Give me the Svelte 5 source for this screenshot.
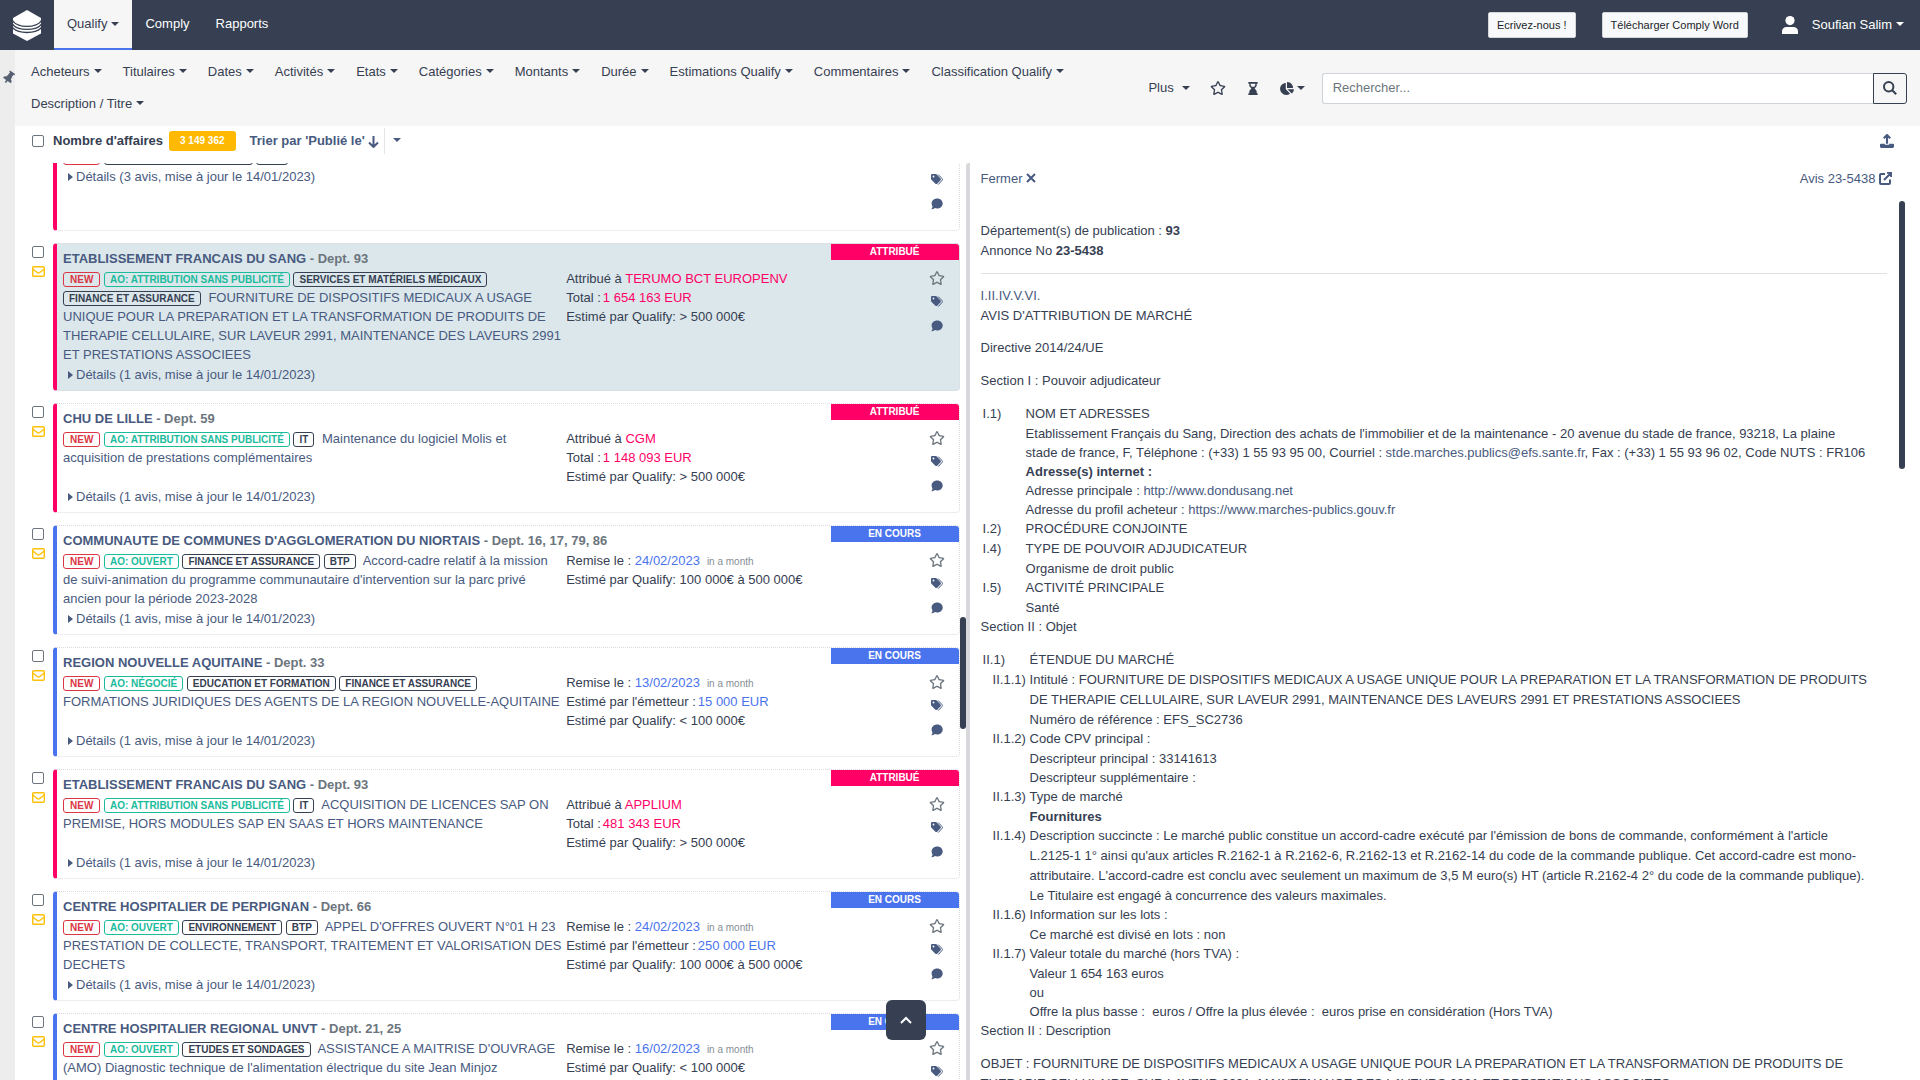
<script>
  const filters = ['Acheteurs', 'Titulaires', 'Dates', 'Activités', 'Etats', 'Catégories', 'Montants', 'Durée', 'Estimations Qualify', 'Commentaires', 'Classification Qualify', 'Description / Titre'];

  const items = [
    { id: 0, buyer: 'COMMUNE DE BREST', dept: 'Dept. 29', won: true, tags: ['NEW', 'EDUCATION ET FORMATION', 'BTP'], title: '', count: 3, info: [] },
    { id: 1, buyer: 'ETABLISSEMENT FRANCAIS DU SANG', dept: 'Dept. 93', won: true, selected: true, tags: ['NEW', 'AO: ATTRIBUTION SANS PUBLICITÉ', 'SERVICES ET MATÉRIELS MÉDICAUX', 'FINANCE ET ASSURANCE'], title: 'FOURNITURE DE DISPOSITIFS MEDICAUX A USAGE UNIQUE POUR LA PREPARATION ET LA TRANSFORMATION DE PRODUITS DE THERAPIE CELLULAIRE, SUR LAVEUR 2991, MAINTENANCE DES LAVEURS 2991 ET PRESTATIONS ASSOCIEES', count: 1, info: [['Attribué à ', 'TERUMO BCT EUROPENV'], ['Total :', '1 654 163 EUR'], ['Estimé par Qualify: > 500 000€']] },
    { id: 2, buyer: 'CHU DE LILLE', dept: 'Dept. 59', won: true, tags: ['NEW', 'AO: ATTRIBUTION SANS PUBLICITÉ', 'IT'], title: 'Maintenance du logiciel Molis et acquisition de prestations complémentaires', count: 1, info: [['Attribué à ', 'CGM'], ['Total :', '1 148 093 EUR'], ['Estimé par Qualify: > 500 000€']] },
    { id: 3, buyer: "COMMUNAUTE DE COMMUNES D'AGGLOMERATION DU NIORTAIS", dept: 'Dept. 16, 17, 79, 86', tags: ['NEW', 'AO: OUVERT', 'FINANCE ET ASSURANCE', 'BTP'], title: "Accord-cadre relatif à la mission de suivi-animation du programme communautaire d'intervention sur la parc privé ancien pour la période 2023-2028", count: 1, info: [['Remise le : ', '24/02/2023', 'in a month'], ['Estimé par Qualify: 100 000€ à 500 000€']] },
    { id: 4, buyer: 'REGION NOUVELLE AQUITAINE', dept: 'Dept. 33', tags: ['NEW', 'AO: NÉGOCIÉ', 'EDUCATION ET FORMATION', 'FINANCE ET ASSURANCE'], title: 'FORMATIONS JURIDIQUES DES AGENTS DE LA REGION NOUVELLE-AQUITAINE', count: 1, info: [['Remise le : ', '13/02/2023', 'in a month'], ["Estimé par l'émetteur :", '15 000 EUR'], ['Estimé par Qualify: < 100 000€']] },
    { id: 5, buyer: 'ETABLISSEMENT FRANCAIS DU SANG', dept: 'Dept. 93', won: true, tags: ['NEW', 'AO: ATTRIBUTION SANS PUBLICITÉ', 'IT'], title: 'ACQUISITION DE LICENCES SAP ON PREMISE, HORS MODULES SAP EN SAAS ET HORS MAINTENANCE', count: 1, info: [['Attribué à ', 'APPLIUM'], ['Total :', '481 343 EUR'], ['Estimé par Qualify: > 500 000€']] },
    { id: 6, buyer: 'CENTRE HOSPITALIER DE PERPIGNAN', dept: 'Dept. 66', tags: ['NEW', 'AO: OUVERT', 'ENVIRONNEMENT', 'BTP'], title: "APPEL D'OFFRES OUVERT N°01 H 23 PRESTATION DE COLLECTE, TRANSPORT, TRAITEMENT ET VALORISATION DES DECHETS", count: 1, info: [['Remise le : ', '24/02/2023', 'in a month'], ["Estimé par l'émetteur :", '250 000 EUR'], ['Estimé par Qualify: 100 000€ à 500 000€']] },
    { id: 7, buyer: 'CENTRE HOSPITALIER REGIONAL UNVT', dept: 'Dept. 21, 25', tags: ['NEW', 'AO: OUVERT', 'ETUDES ET SONDAGES'], title: "ASSISTANCE A MAITRISE D'OUVRAGE (AMO) Diagnostic technique de l'alimentation électrique du site Jean Minjoz", count: 1, info: [['Remise le : ', '16/02/2023', 'in a month'], ['Estimé par Qualify: < 100 000€']] }
  ];

  function tagKind(tag) {
    if (tag === 'NEW') return 'new';
    return tag.startsWith('AO:') ? 'procedure' : 'sector';
  }

  const lots = [
    ['II.1.1)', ['Intitulé : FOURNITURE DE DISPOSITIFS MEDICAUX A USAGE UNIQUE POUR LA PREPARATION ET LA TRANSFORMATION DE PRODUITS DE THERAPIE CELLULAIRE, SUR LAVEUR 2991, MAINTENANCE DES LAVEURS 2991 ET PRESTATIONS ASSOCIEES', 'Numéro de référence : EFS_SC2736']],
    ['II.1.2)', ['Code CPV principal :', 'Descripteur principal : 33141613', 'Descripteur supplémentaire :']],
    ['II.1.3)', ['Type de marché', '*Fournitures']],
    ['II.1.4)', ["Description succincte : Le marché public constitue un accord-cadre exécuté par l'émission de bons de commande, conformément à l'article L.2125-1 1° ainsi qu'aux articles R.2162-1 à R.2162-6, R.2162-13 et R.2162-14 du code de la commande publique. Cet accord-cadre est mono-attributaire. L'accord-cadre est conclu avec seulement un maximum de 3,5 M euro(s) HT (article R.2162-4 2° du code de la commande publique).", 'Le Titulaire est engagé à concurrence des valeurs maximales.']],
    ['II.1.6)', ['Information sur les lots :', 'Ce marché est divisé en lots : non']],
    ['II.1.7)', ['Valeur totale du marché (hors TVA) :', 'Valeur 1 654 163 euros', 'ou', 'Offre la plus basse :\u00a0 euros / Offre la plus élevée :\u00a0 euros prise en considération (Hors TVA)']]
  ];
</script>

{#snippet star()}
  <svg class="icon star" viewBox="0 0 576 512" aria-hidden="true"><path d="M528.1 171.5L382 150.2 316.7 17.8c-11.7-23.6-45.6-23.9-57.4 0L194 150.2 47.9 171.5c-26.2 3.8-36.7 36.1-17.7 54.6l105.7 103-25 145.5c-4.5 26.3 23.2 46 46.4 33.7L288 439.6l130.7 68.7c23.2 12.2 50.9-7.4 46.4-33.7l-25-145.5 105.7-103c19-18.5 8.5-50.8-17.7-54.6zM388.6 312.3l23.7 138.4L288 385.4l-124.3 65.3 23.7-138.4-100.6-98 139-20.2 62.2-126 62.2 126 139 20.2-100.6 98z" /></svg>
{/snippet}

<div class="app">
  <header class="topbar">
    <a class="logo" href="#home" aria-label="Accueil">
      <svg viewBox="0 0 28 31" aria-hidden="true">
        <path fill="#fff" d="M14 0 28 8v15.500L14 31 0 23.500V8z" />
        <path fill="none" stroke="#364052" stroke-width="1.300" d="M-.5 10.500C2 14.500 7 16.300 14 16.300s12-1.800 14.500-5.800M-.5 14C2 17.800 7 19.400 14 19.400s12-1.600 14.500-5.400M-.5 17.500C2 21 7 22.500 14 22.500s12-1.500 14.500-5" />
      </svg>
    </a>
    <nav class="tabs" aria-label="Applications">
      <button class="tab active">Qualify<span class="caret"></span></button>
      <a class="tab" href="#comply">Comply</a>
      <a class="tab" href="#rapports">Rapports</a>
    </nav>
    <div class="account">
      <button class="light">Ecrivez-nous !</button>
      <button class="light">Télécharger Comply Word</button>
      <button class="user">
        <svg viewBox="0 0 16 18" aria-hidden="true"><circle cx="8" cy="4.600" r="4.600" /><path d="M0 18v-2.500C0 12.500 2 11 4.500 11h7c2.500 0 4.500 1.500 4.500 4.500V18z" /></svg>
        <span>Soufian Salim<span class="caret"></span></span>
      </button>
    </div>
  </header>

  <div class="body">
    <aside class="rail">
      <button aria-label="Épingler">
        <svg viewBox="0 0 384 512" aria-hidden="true"><path d="M298 278l-22-114V64h20a24 24 0 0 0 24-24V24a24 24 0 0 0-24-24H88a24 24 0 0 0-24 24v16a24 24 0 0 0 24 24h20v100L86 278c-48 20-86 56-86 98 0 13 11 24 24 24h136v88l32 24 32-24v-88h136c13 0 24-11 24-24 0-43-38-78-86-98z" /></svg>
      </button>
    </aside>

    <main class="workspace">
      <div class="filterbar">
        <div class="filters">
          {#each filters as name}
            <button>{name}<span class="caret"></span></button>
          {/each}
        </div>
        <div class="tools">
          <button class="plus">Plus<span class="caret"></span></button>
          <button aria-label="Favoris">{@render star()}</button>
          <button aria-label="En attente">
            <svg class="hourglass" viewBox="0 0 10 14" aria-hidden="true"><path fill-rule="evenodd" d="M0 0h10v2H9v1.500C9 5 7.600 6 6.700 7 7.600 8 9 9 9 10.500V12h1v2H0v-2h1v-1.500C1 9 2.400 8 3.300 7 2.400 6 1 5 1 3.500V2H0zM2.500 2v1.200L3.600 5h2.800l1.100-1.800V2z" /></svg>
          </button>
          <button class="chart" aria-label="Statistiques">
            <svg viewBox="0 0 544 512" aria-hidden="true"><path d="M527.800 288H290.500l158 158c6 6 15.800 6.500 21.900.7 38.700-36.500 65.600-85.600 73.100-141 1.300-9.500-6.100-17.700-15.700-17.700zM511.900 223.200C503.700 103.700 408.300 8.300 288.800.1c-9.100-.6-16.800 7.100-16.800 16.200V240h223.800c9.100 0 16.800-7.700 16.100-16.800zM224 288V50.700c0-9.600-8.200-17-17.700-15.600C86.200 52-5.300 155.900.2 280.500 5.900 408.500 114.900 513.600 243 512c50.400-.6 96.900-16.900 135.300-44 7.900-5.600 8.400-17.200 1.600-24.100L224 288z" /></svg><span class="caret"></span>
          </button>
        </div>
        <form class="search">
          <input type="search" placeholder="Rechercher..." aria-label="Rechercher" />
          <button type="button" aria-label="Lancer la recherche">
            <svg viewBox="0 0 14 14" aria-hidden="true"><circle cx="5.700" cy="5.700" r="4.700" /><path d="m9.200 9.200 4 4" /></svg>
          </button>
        </form>
      </div>

      <div class="listbar">
        <input class="check" type="checkbox" aria-label="Tout sélectionner" />
        <strong>Nombre d'affaires</strong>
        <span class="total">3 149 362</span>
        <button class="sort">Trier par 'Publié le'<svg viewBox="0 0 11 13" aria-hidden="true"><path d="M5.500 1v11M1 7.500 5.500 12 10 7.500" /></svg></button>
        <button class="sortmenu" aria-label="Options de tri"><span class="caret"></span></button>
        <button class="export" aria-label="Exporter">
          <svg viewBox="0 0 13 13" aria-hidden="true"><path class="line" d="M6.500 9V1.500M3.500 4l3-3 3 3" /><path d="M0 9.500 1 9h3.500v1h4V9H12l1 .5V12l-1 1H1l-1-1z" /></svg>
        </button>
      </div>

      <div class="panes">
        <section class="results" aria-label="Affaires">
          <div class="stack">
            {#each items as item (item.id)}
              <div class="entry">
                <div class="gutter">
                  <input class="check" type="checkbox" aria-label={item.buyer} />
                  <button aria-label="Envoyer">
                    <svg viewBox="0 0 13 11" aria-hidden="true"><rect x=".7" y=".7" width="11.600" height="9.600" rx="1" /><path d="m.8 3 4.700 3.700q1 .7 2 0L12.200 3" /></svg>
                  </button>
                </div>
                <article class="card" class:won={item.won} class:selected={item.selected}>
                  <span class="status">{item.won ? 'ATTRIBUÉ' : 'EN COURS'}</span>
                  <div class="content">
                    <h2>{item.buyer} <span>- {item.dept}</span></h2>
                    <div class="cols">
                      <a class="desc" href="#affaire">
                        {#each item.tags as tag, i}<span class="tag {tagKind(tag)}" class:last={i === item.tags.length - 1}>{tag}</span>{' '}{/each}
                        <span>{item.title}</span>
                      </a>
                      <div class="info">
                        {#each item.info as [label, value, hint]}
                          <div>{label}{#if value}<b class:amount={label.endsWith(':')}>{value}</b>{/if}{#if hint}<small>{hint}</small>{/if}</div>
                        {/each}
                      </div>
                    </div>
                    <button class="details"><i></i>Détails ({item.count} avis, mise à jour le 14/01/2023)</button>
                  </div>
                  <div class="actions">
                    <button aria-label="Favori">{@render star()}</button>
                    <button aria-label="Étiquettes">
                      <svg class="small" viewBox="0 0 12 12" aria-hidden="true"><path fill-rule="evenodd" d="M0 1.200C0 .5.500 0 1.200 0h3.600q.6 0 1 .4l3.800 4q.8.900 0 1.800L6.200 9.700q-.9.800-1.800 0L.4 5.800Q0 5.400 0 4.800zM2.500 1.600a.9.9 0 1 0 0 1.800.9.900 0 0 0 0-1.800z" /><path class="line" d="m7.200.6 3.700 3.800q1 1.100 0 2.200L7.200 10.600" /></svg>
                    </button>
                    <button aria-label="Commentaires">
                      <svg class="small" viewBox="0 0 12 12" aria-hidden="true"><path d="M6.200.5C9.400.5 11.700 2.700 11.700 5.500s-2.300 5-5.500 5q-1.300 0-2.300-.4-1.500 1.200-3.700 1.200Q1.400 10 1.500 8.600.6 7.200.6 5.500C.6 2.700 3 .5 6.200.5z" /></svg>
                    </button>
                  </div>
                </article>
              </div>
            {/each}
          </div>
          <span class="thumb listthumb"></span>
          <button class="totop" aria-label="Haut de page">
            <svg viewBox="0 0 12 8" aria-hidden="true"><path d="m1 7 5-5 5 5" /></svg>
          </button>
        </section>

        <section class="notice" aria-label="Avis">
          <div class="noticebar">
            <button>Fermer <svg viewBox="0 0 10 10" aria-hidden="true"><path d="m1 1 8 8M9 1 1 9" /></svg></button>
            <a href="#avis">Avis 23-5438 <svg class="ext" viewBox="0 0 13 13" aria-hidden="true"><path d="M6 2H2Q1 2 1 3v8q0 1 1 1h8q1 0 1-1V7.500M5 8l6.500-6.500M8 .8h4.200V5" /></svg></a>
          </div>
          <div class="doc">
            <div class="block"><p>Département(s) de publication : <b>93</b></p><p>Annonce No <b>23-5438</b></p></div>
            <hr />
            <div class="block"><p><a href="#i">I.</a><a href="#ii">II.</a><a href="#iv">IV.</a><a href="#v">V.</a><a href="#vi">VI.</a></p><p>AVIS D'ATTRIBUTION DE MARCHÉ</p></div>
            <div class="block"><p>Directive 2014/24/UE</p></div>
            <div class="block"><p>Section I : Pouvoir adjudicateur</p></div>
            <div class="clauses">
              <span class="num">I.1)</span>
              <div>
                <p>NOM ET ADRESSES</p>
                <p>Etablissement Français du Sang, Direction des achats de l'immobilier et de la maintenance - 20 avenue du stade de france, 93218, La plaine stade de france, F, Téléphone : (+33) 1 55 93 95 00, Courriel : <a href="#mail">stde.marches.publics@efs.sante.fr</a>, Fax : (+33) 1 55 93 96 02, Code NUTS : FR106</p>
                <p><b>Adresse(s) internet :</b></p>
                <p>Adresse principale : <a href="#site">http://www.dondusang.net</a></p>
                <p>Adresse du profil acheteur : <a href="#profil">https://www.marches-publics.gouv.fr</a></p>
              </div>
              <span class="num">I.2)</span>
              <div><p>PROCÉDURE CONJOINTE</p></div>
              <span class="num">I.4)</span>
              <div><p>TYPE DE POUVOIR ADJUDICATEUR</p><p>Organisme de droit public</p></div>
              <span class="num">I.5)</span>
              <div><p>ACTIVITÉ PRINCIPALE</p><p>Santé</p></div>
            </div>
            <div class="block"><p>Section II : Objet</p></div>
            <div class="clauses wide">
              <span class="num">II.1)</span>
              <div><p>ÉTENDUE DU MARCHÉ</p></div>
              {#each lots as [num, lines]}
                <span class="num sub">{num}</span>
                <div>
                  {#each lines as line}
                    <p>{#if line.startsWith('*')}<b>{line.slice(1)}</b>{:else}{line}{/if}</p>
                  {/each}
                </div>
              {/each}
            </div>
            <div class="block"><p>Section II : Description</p></div>
            <div class="block"><p>OBJET : FOURNITURE DE DISPOSITIFS MEDICAUX A USAGE UNIQUE POUR LA PREPARATION ET LA TRANSFORMATION DE PRODUITS DE THERAPIE CELLULAIRE, SUR LAVEUR 2991, MAINTENANCE DES LAVEURS 2991 ET PRESTATIONS ASSOCIEES</p></div>
          </div>
          <span class="thumb docthumb"></span>
        </section>
      </div>
    </main>
  </div>
</div>

<style>
  :global(body) {
    margin: 0;
  }
  .app {
    --ink: #364052;
    --link: #485a80;
    display: flex;
    flex-direction: column;
    height: 100vh;
    overflow: hidden;
    background: #fff;
    color: var(--ink);
    font: 13px/20px 'Liberation Sans', Arial, sans-serif;
  }
  .app * {
    box-sizing: border-box;
  }
  button {
    margin: 0;
    padding: 0;
    border: 0;
    background: none;
    color: inherit;
    font: inherit;
    white-space: nowrap;
    cursor: pointer;
  }
  a {
    color: var(--link);
    text-decoration: none;
  }
  svg {
    flex: none;
    fill: currentColor;
  }
  p,
  h2 {
    margin: 0;
    font-size: 13px;
  }
  .caret {
    display: inline-block;
    margin-left: 4px;
    vertical-align: 3px;
    border-top: 4px solid currentColor;
    border-left: 4px solid transparent;
    border-right: 4px solid transparent;
  }
  .check {
    appearance: none;
    width: 12px;
    height: 12px;
    margin: 0;
    border: 1px solid #6c757d;
    border-radius: 2px;
    background: #fff;
  }

  .topbar {
    display: flex;
    flex: none;
    height: 50px;
    background: var(--ink);
    color: #fff;
  }
  .logo {
    display: flex;
    align-items: center;
    padding: 0 13px;
  }
  .logo svg {
    width: 28px;
    height: 31px;
  }
  .tabs {
    display: flex;
  }
  .tab {
    display: flex;
    align-items: center;
    padding: 0 13px;
    border-bottom: 2px solid transparent;
    color: #fff;
  }
  .tab.active {
    border-color: #4a74ee;
    background: #f6f6f6;
    color: var(--ink);
  }
  .account {
    display: flex;
    align-items: center;
    margin-left: auto;
    padding-right: 16px;
  }
  .light {
    height: 26px;
    margin-right: 26px;
    padding: 0 8px;
    border: 1px solid #d3d6da;
    border-radius: 2px;
    background: #f8f9fa;
    color: #212529;
    font-size: 11px;
  }
  .user {
    display: flex;
    align-items: center;
    gap: 14px;
    margin-left: 8px;
  }
  .user svg {
    width: 16px;
    height: 18px;
  }

  .body {
    display: flex;
    flex: 1;
    min-height: 0;
  }
  .rail {
    flex: none;
    width: 15px;
    padding-top: 20px;
    background: #ededed;
    color: #566072;
  }
  .rail svg {
    display: block;
    width: 10px;
    height: 13px;
    margin-left: 4px;
    transform: rotate(35deg);
  }
  .workspace {
    display: flex;
    flex: 1;
    flex-direction: column;
    min-width: 0;
  }

  .filterbar {
    display: grid;
    flex: none;
    grid-template-columns: minmax(0, 21fr) auto minmax(0, 11fr);
    align-items: center;
    min-height: 76px;
    padding: 0 13px 0 16px;
    background: #f6f6f6;
  }
  .filters {
    display: flex;
    flex-wrap: wrap;
    gap: 12px 21px;
  }
  .tools {
    display: flex;
    align-items: center;
    padding-right: 17px;
  }
  .tools button {
    display: flex;
    align-items: center;
  }
  .tools .plus {
    margin-right: 20px;
  }
  .plus .caret {
    margin-left: 8px;
  }
  .star {
    width: 16px;
    height: 14px;
  }
  .hourglass {
    width: 10px;
    height: 13px;
    margin: 0 22px;
  }
  .chart svg {
    width: 14px;
    height: 13px;
  }
  .chart .caret {
    margin-left: 3px;
  }
  .search {
    display: flex;
    height: 31px;
  }
  .search input {
    flex: 1;
    min-width: 0;
    padding: 0 10px;
    border: 1px solid #ced4da;
    border-right: 0;
    border-radius: 3px 0 0 3px;
    background: #fff;
    color: var(--ink);
    font: inherit;
  }
  .search input::placeholder {
    color: #6c757d;
  }
  .search button {
    display: flex;
    align-items: center;
    justify-content: center;
    width: 34px;
    border: 1px solid var(--ink);
    border-radius: 0 3px 3px 0;
  }
  .search svg {
    width: 14px;
    height: 14px;
    fill: none;
    stroke: currentColor;
    stroke-width: 2;
  }

  .listbar {
    display: flex;
    flex: none;
    align-items: center;
    height: 37px;
    padding: 0 26px 7px 17px;
    color: var(--link);
  }
  .listbar strong {
    margin: 0 6px 0 9px;
    color: var(--ink);
  }
  .total {
    margin-right: 14px;
    padding: 0 11px;
    border-radius: 3px;
    background: #ffb900;
    color: #fff;
    font-weight: bold;
    font-size: 10px;
  }
  .sort {
    display: flex;
    align-items: center;
    gap: 3px;
    padding-right: 5px;
    font-weight: bold;
  }
  .sort svg {
    width: 11px;
    height: 13px;
    fill: none;
    stroke: currentColor;
    stroke-width: 2;
  }
  .sortmenu {
    height: 26px;
    padding: 0 4px;
    border-left: 1px solid #e3e5e8;
  }
  .export {
    display: flex;
    margin-left: auto;
  }
  .export svg {
    width: 14px;
    height: 14px;
  }
  .export .line {
    fill: none;
    stroke: currentColor;
    stroke-width: 2;
  }

  .panes {
    display: grid;
    flex: 1;
    grid-template-columns: minmax(0, 499fr) minmax(0, 501fr);
    min-height: 0;
  }
  .results {
    position: relative;
    overflow: hidden;
    padding: 0 6px 0 17px;
  }
  .stack {
    display: grid;
    gap: 12px;
    margin-top: -42px;
  }
  .entry {
    display: flex;
  }
  .gutter {
    display: flex;
    flex: none;
    flex-direction: column;
    align-items: flex-start;
    gap: 8px;
    width: 21px;
    padding-top: 3px;
  }
  .gutter button {
    display: flex;
  }
  .gutter svg {
    width: 13px;
    height: 11px;
    fill: none;
    stroke: #ffc107;
    stroke-width: 1.4;
  }
  .card {
    position: relative;
    display: grid;
    flex: 1;
    grid-template-columns: minmax(0, 1fr) 22px;
    min-width: 0;
    min-height: 110px;
    padding: 5px 11px 5px 6px;
    border: 1px dotted #d9dcdf;
    border-left: 4px solid #4a74ee;
    border-radius: 4px;
  }
  .card.won {
    border-left-color: #ff0066;
  }
  .card.selected {
    background: #dbe7eb;
  }
  .status {
    position: absolute;
    top: 0;
    right: 0;
    width: 128px;
    border-radius: 0 3px 0 0;
    background: #4a74ee;
    color: #fff;
    font: bold 10px/16px 'Liberation Sans', Arial, sans-serif;
    text-align: center;
  }
  .won .status {
    background: #ff0066;
  }
  h2 {
    color: var(--link);
    white-space: nowrap;
  }
  h2 span {
    color: #6c757d;
  }
  .cols {
    display: grid;
    grid-template-columns: minmax(0, 7fr) minmax(0, 5fr);
    padding-bottom: 1px;
    line-height: 19px;
  }
  .desc {
    padding-right: 3px;
  }
  .tag {
    display: inline-block;
    height: 15px;
    margin-top: 3px;
    padding: 0 5px;
    border: 1px solid var(--ink);
    border-radius: 3px;
    color: var(--ink);
    font: bold 10px/14px 'Liberation Sans', Arial, sans-serif;
    vertical-align: top;
  }
  .tag.last {
    margin-right: 4px;
  }
  .tag.new {
    padding: 0 6px;
    border-color: #dc3545;
    color: #dc3545;
  }
  .tag.procedure {
    border-color: #1abc9c;
    color: #1abc9c;
  }
  .info b {
    color: #4a74ee;
    font-weight: normal;
  }
  .info .amount {
    margin-left: 2px;
  }
  .won .info b {
    color: #ff0066;
  }
  .info small {
    margin-left: 7px;
    color: #868e96;
    font-size: 10px;
    line-height: 10px;
  }
  .details {
    display: flex;
    align-items: center;
    gap: 3px;
    padding-left: 5px;
    color: var(--link);
  }
  .details i {
    border: 4px solid transparent;
    border-right: 0;
    border-left: 5px solid var(--link);
  }
  .actions {
    display: flex;
    flex-direction: column;
    align-items: center;
    padding-top: 17px;
    color: var(--link);
  }
  .actions button {
    display: flex;
    align-items: center;
    height: 24px;
  }
  .actions .star {
    color: #6c757d;
  }
  .small {
    width: 12px;
    height: 12px;
  }
  .small .line {
    fill: none;
    stroke: currentColor;
  }
  .thumb {
    position: absolute;
    width: 6px;
    border-radius: 3px;
    background: var(--ink);
  }
  .listthumb {
    top: 454px;
    right: 0;
    height: 112px;
  }
  .totop {
    position: absolute;
    right: 40px;
    bottom: 40px;
    width: 40px;
    height: 40px;
    border-radius: 6px;
    background: var(--ink);
    color: #fff;
  }
  .totop svg {
    width: 12px;
    height: 8px;
    fill: none;
    stroke: currentColor;
    stroke-width: 2;
  }

  .notice {
    position: relative;
    display: flex;
    flex-direction: column;
    overflow: hidden;
    padding: 0 33px 0 11px;
    border-left: 4px solid #d8d9dd;
    border-top-left-radius: 3px;
  }
  .noticebar {
    display: flex;
    flex: none;
    justify-content: space-between;
    margin-right: -5px;
    padding: 6px 0 12px;
    color: var(--link);
  }
  .noticebar svg {
    width: 10px;
    height: 10px;
    fill: none;
    stroke: currentColor;
    stroke-width: 2;
  }
  .noticebar .ext {
    width: 13px;
    height: 13px;
    vertical-align: -2px;
  }
  .doc {
    padding-top: 20px;
  }
  .block {
    margin-bottom: 13px;
  }
  p + p {
    line-height: 19px;
  }
  hr {
    margin: 13px 0 12px;
    border: 0;
    border-top: 1px solid #dfe1e4;
  }
  .clauses {
    display: grid;
    grid-template-columns: 43px minmax(0, 1fr);
    padding: 0 18px 0 2px;
  }
  .clauses.wide {
    grid-template-columns: 47px minmax(0, 1fr);
    padding-right: 17px;
  }
  .num.sub {
    padding-left: 10px;
  }
  .docthumb {
    top: 38px;
    right: 15px;
    height: 268px;
  }
</style>
